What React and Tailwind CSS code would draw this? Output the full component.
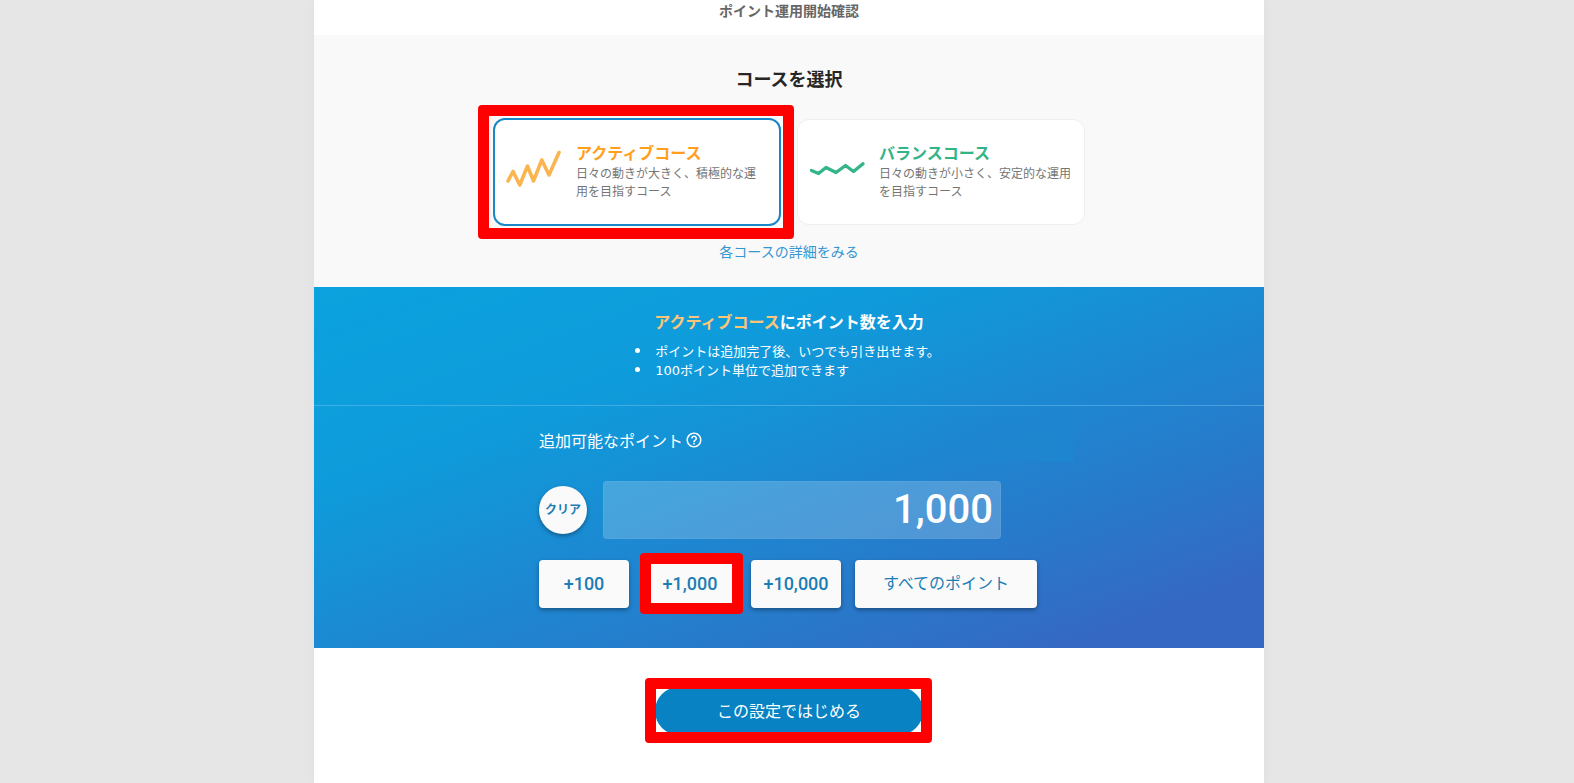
import { useState } from "react";

function Highlight({ className = "" }) {
  return (
    <span
      aria-hidden="true"
      className={`pointer-events-none absolute rounded border-[11px] border-[#ff0000] ${className}`}
    />
  );
}

function CourseCard({ name, description, selected, onSelect, titleClass, children }) {
  return (
    <button
      type="button"
      aria-pressed={selected}
      onClick={onSelect}
      className={`flex w-full items-center gap-3 rounded-xl bg-white px-3 pt-[21px] pb-6 text-left ${
        selected ? "border-2 border-[#1a87c9]" : "border border-[#eeeeee]"
      }`}
    >
      {children}
      <span className="block flex-1">
        <span className={`mb-px block text-base leading-[22px] font-bold ${titleClass}`}>{name}</span>
        <span className="block text-xs leading-[18px] text-[#757575]">{description}</span>
      </span>
    </button>
  );
}

function AmountButton({ children, onClick, className = "" }) {
  return (
    <button
      type="button"
      onClick={onClick}
      className={`h-12 rounded bg-[#fafafa] text-[#1b7db5] shadow-[0_2px_4px_rgba(0,0,0,0.35)] ${className}`}
    >
      {children}
    </button>
  );
}

export default function App() {
  const [course, setCourse] = useState("active");
  const [points, setPoints] = useState(1000);

  return (
    <div className="min-h-screen bg-[#e6e6e6] pl-1 font-['Noto_Sans_CJK_JP',sans-serif]">
      <main className="mx-auto flex min-h-screen max-w-[950px] flex-col bg-white shadow-[0_0_10px_rgba(0,0,0,0.04)]">
        <header className="h-[35px] text-center text-sm leading-5 font-bold text-[#666666]">
          <h1>ポイント運用開始確認</h1>
        </header>

        <section className="bg-[#f9f9f9] px-4 pt-[31px] pb-[25px] text-center">
          <h2 className="text-lg leading-6 font-bold text-[#262626]">コースを選択</h2>
          <div className="mx-auto mt-7 grid max-w-[592px] grid-cols-2 items-center gap-4">
            <div className="relative">
              <CourseCard
                name="アクティブコース"
                description="日々の動きが大きく、積極的な運用を目指すコース"
                titleClass="text-[#ff9f1c]"
                selected={course === "active"}
                onSelect={() => setCourse("active")}
              >
                <svg viewBox="0 0 57 40" className="h-10 w-[57px] shrink-0 overflow-visible" fill="none" stroke="#fbb550" strokeWidth="3.6" strokeLinecap="round" strokeLinejoin="round">
                  <path d="M1 30 6 20.500 12.800 34 20.500 15 26.500 30 34.800 9 42 24 52 1.500" />
                </svg>
              </CourseCard>
              <Highlight className="-inset-y-[13px] -right-[13px] -left-[15px]" />
            </div>
            <CourseCard
              name="バランスコース"
              description="日々の動きが小さく、安定的な運用を目指すコース"
              titleClass="text-[#33b487]"
              selected={course === "balance"}
              onSelect={() => setCourse("balance")}
            >
              <svg viewBox="0 0 57 40" className="h-10 w-[57px] shrink-0 overflow-visible" fill="none" stroke="#33b587" strokeWidth="3.4" strokeLinecap="round" strokeLinejoin="round">
                <path d="M1.500 19.500 8.500 22.500 16 16.500 26 21.500 35.500 14.500 43.500 20.500 53 12.800" />
              </svg>
            </CourseCard>
          </div>
          <a href="#courses" className="mt-[15px] inline-block text-sm leading-5 text-[#3496d3]">
            各コースの詳細をみる
          </a>
        </section>

        <section className="bg-[linear-gradient(160deg,#0aa2de_0%,#0f9bdb_30%,#2879ca_72%,#3568c3_90%)] text-white">
          <div className="flex flex-col items-center border-b border-[#6fc0f2]/50 px-4 pt-[22px] pb-[25px]">
            <h2 className="text-base leading-6 font-bold">
              <span className="text-[#fdc578]">アクティブコース</span>にポイント数を入力
            </h2>
            <ul className="mt-2 list-disc pl-[14px] text-[13px] leading-[19px]">
              <li className="pl-[3px]">ポイントは追加完了後、いつでも引き出せます。</li>
              <li className="pl-[3px]">
                <span className="font-['DejaVu_Sans',sans-serif]">100</span>ポイント単位で追加できます
              </li>
            </ul>
          </div>

          <div className="mx-auto max-w-[500px] pt-[18px] pb-10">
            <div className="flex h-8 items-center gap-0.5">
              <label htmlFor="points" className="text-base leading-6">追加可能なポイント</label>
              <button type="button" aria-label="ヘルプ">
                <svg viewBox="0 0 24 24" className="size-[18px]" fill="currentColor">
                  <path d="M11 18h2v-2h-2v2zm1-16C6.480 2 2 6.480 2 12s4.480 10 10 10 10-4.480 10-10S17.520 2 12 2zm0 18c-4.410 0-8-3.590-8-8s3.590-8 8-8 8 3.590 8 8-3.590 8-8 8zm0-14c-2.210 0-4 1.790-4 4h2c0-1.100.900-2 2-2s2 .900 2 2c0 2-3 1.750-3 5h2c0-2.250 3-2.500 3-5 0-2.210-1.790-4-4-4z" />
                </svg>
              </button>
              <span aria-hidden="true" className="-mr-[34px] ml-auto h-11 w-40 bg-linear-to-r from-transparent to-[#1e86d0]" />
            </div>

            <div className="mt-[25px] flex items-center gap-4">
              <button
                type="button"
                onClick={() => setPoints(0)}
                className="size-12 shrink-0 rounded-full bg-[#fafafa] pb-0.5 text-xs font-bold text-[#1b7db5] shadow-[0_2px_4px_rgba(0,0,0,0.35)]"
              >
                クリア
              </button>
              <input
                id="points"
                type="text"
                inputMode="numeric"
                value={points.toLocaleString("en-US")}
                onChange={(e) => setPoints(Number(e.target.value.replace(/\D/g, "")))}
                className="h-[58px] w-[398px] min-w-0 rounded border border-white/5 bg-white/20 px-[7px] text-right font-['Roboto',sans-serif] text-[40px] font-medium text-white outline-none"
              />
            </div>

            <div className="mt-[21px] flex gap-[14px]">
              <div className="flex gap-4 font-['Roboto',sans-serif] text-lg font-medium">
                <AmountButton className="w-[90px]" onClick={() => setPoints(points + 100)}>+100</AmountButton>
                <div className="relative">
                  <AmountButton className="w-[90px]" onClick={() => setPoints(points + 1000)}>+1,000</AmountButton>
                  <Highlight className="-top-[7px] -right-2 -bottom-[6px] -left-[5px]" />
                </div>
                <AmountButton className="w-[90px]" onClick={() => setPoints(points + 10000)}>+10,000</AmountButton>
              </div>
              <AmountButton className="w-[182px] pb-1 text-base">すべてのポイント</AmountButton>
            </div>
          </div>
        </section>

        <div className="flex justify-center pt-[39px] pb-12">
          <div className="relative">
            <button type="button" className="h-12 w-[268px] rounded-full bg-[#0882c2] pb-0.5 text-base text-white">
              この設定ではじめる
            </button>
            <Highlight className="-top-[9px] -right-[9px] -bottom-2 -left-[10px]" />
          </div>
        </div>
      </main>
    </div>
  );
}
